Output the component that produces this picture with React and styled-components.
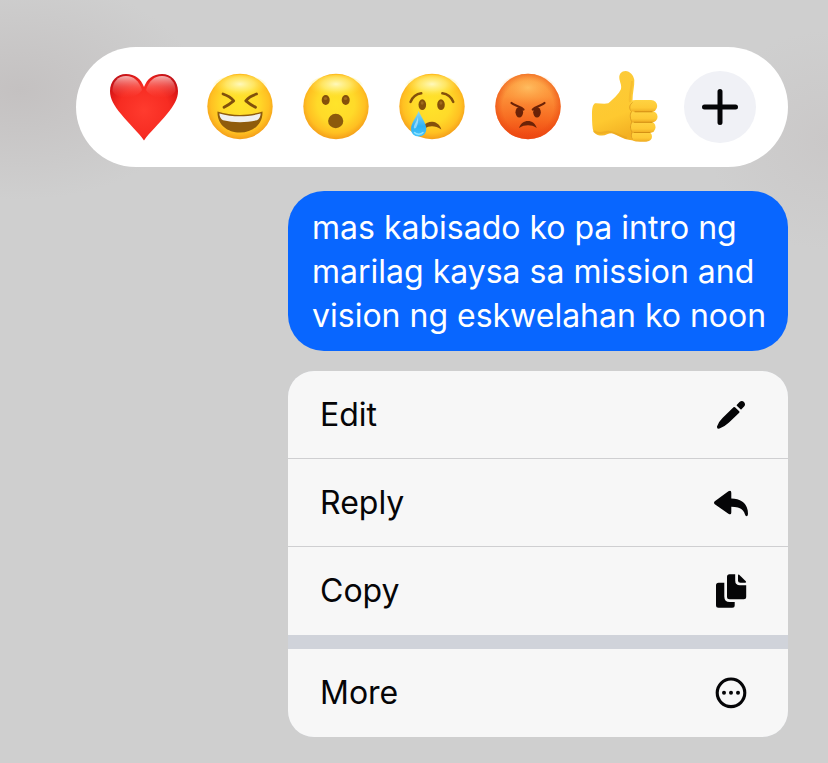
import styled, { createGlobalStyle } from 'styled-components'

const HeartEmoji = () => (
    <svg viewBox="0 0 72 72" aria-hidden="true">
        <defs>
            <radialGradient id="heartFill" cx="0.5" cy="0.55" r="0.62">
                <stop offset="0" stopColor="#ff3b2e" />
                <stop offset="0.6" stopColor="#f72c22" />
                <stop offset="0.85" stopColor="#e01a18" />
                <stop offset="1" stopColor="#c51318" />
            </radialGradient>
            <linearGradient id="heartShine" x1="0" y1="0" x2="0" y2="1">
                <stop offset="0" stopColor="#ffd9d6" stopOpacity="0.8" />
                <stop offset="0.5" stopColor="#ff9a94" stopOpacity="0.35" />
                <stop offset="1" stopColor="#ff5a50" stopOpacity="0" />
            </linearGradient>
        </defs>
        <path
            d="M36 69.5C31 62 21 53 13 43C6 34.5 2 28 2 20C2 10 9 3 18 3C27 3 33 8 36 16C39 8 45 3 54 3C63 3 70 10 70 20C70 28 66 34.5 59 43C51 53 41 62 36 69.5Z"
            fill="url(#heartFill)"
        />
        <path d="M4.5 20C4.5 11 10 5 18 5C26 5 31 10 34 19C30 26 12 32 4.5 20Z" fill="url(#heartShine)" />
        <path d="M67.5 20C67.5 11 62 5 54 5C46 5 41 10 38 19C42 26 60 32 67.5 20Z" fill="url(#heartShine)" />
    </svg>
)

const YellowFace = ({ id, children }) => (
    <svg viewBox="0 0 72 72" aria-hidden="true">
        <defs>
            <radialGradient id={id} cx="0.5" cy="0.46" r="0.57">
                <stop offset="0" stopColor="#ffe42a" />
                <stop offset="0.5" stopColor="#ffda29" />
                <stop offset="0.78" stopColor="#ffc022" />
                <stop offset="1" stopColor="#f19418" />
            </radialGradient>
            <radialGradient id={id + 'Shine'} cx="0.5" cy="0.35" r="0.5">
                <stop offset="0" stopColor="#fffac4" stopOpacity="0.95" />
                <stop offset="0.5" stopColor="#fff283" stopOpacity="0.65" />
                <stop offset="1" stopColor="#ffe43a" stopOpacity="0" />
            </radialGradient>
        </defs>
        <circle cx="36" cy="35.5" r="32.7" fill={`url(#${id})`} />
        <ellipse cx="36" cy="17" rx="28" ry="13" fill={`url(#${id}Shine)`} />
        {children}
    </svg>
)

const LaughEmoji = () => (
    <YellowFace id="laughFill">
        <path d="M19 23C23.5 24.5 27.5 27 29.7 29.8C27 32 23.5 34.5 20 36.3" fill="none" stroke="#80500c" strokeWidth="2.8" strokeLinecap="round" strokeLinejoin="round" />
        <path d="M52.5 23C48 24.5 44 27 41.8 29.8C44.5 32 48 34.5 51.5 36.3" fill="none" stroke="#80500c" strokeWidth="2.8" strokeLinecap="round" strokeLinejoin="round" />
        <path d="M13.5 40.5C28 45 44 45 58.5 40.5C59 53 49 61.5 36 61.5C23 61.5 13 53 13.5 40.5Z" fill="#8f5c0c" />
        <path d="M15.3 42.5C29 46.3 43 46.3 56.7 42.5C56.3 46 55.2 48.3 53 49.2C42 51.8 30 51.8 19 49.2C16.8 48.3 15.7 46 15.3 42.5Z" fill="#f0f0ee" />
    </YellowFace>
)

const WowEmoji = () => (
    <YellowFace id="wowFill">
        <ellipse cx="25.7" cy="29" rx="4" ry="5" fill="#84500b" />
        <ellipse cx="45.7" cy="29" rx="4" ry="5" fill="#84500b" />
        <ellipse cx="25.5" cy="27.5" rx="1.7" ry="1.5" fill="#a06a1c" />
        <ellipse cx="45.5" cy="27.5" rx="1.7" ry="1.5" fill="#a06a1c" />
        <ellipse cx="35.7" cy="50" rx="7.6" ry="7.2" fill="#8c5a0c" />
    </YellowFace>
)

const CryEmoji = () => (
    <YellowFace id="cryFill">
        <defs>
            <linearGradient id="tearFill" x1="0" y1="0" x2="0" y2="1">
                <stop offset="0" stopColor="#8fd8f5" />
                <stop offset="0.6" stopColor="#2fb1f2" />
                <stop offset="1" stopColor="#45c4fb" />
            </linearGradient>
        </defs>
        <path d="M14.5 31C16.5 26 20 23 25.3 22.3" fill="none" stroke="#84500b" strokeWidth="2.4" strokeLinecap="round" />
        <path d="M57.3 31C55.3 26 51.5 23 46.3 22.3" fill="none" stroke="#84500b" strokeWidth="2.4" strokeLinecap="round" />
        <ellipse cx="26.3" cy="33.7" rx="3.8" ry="5.4" fill="#84500b" />
        <ellipse cx="45" cy="33.7" rx="3.8" ry="5.4" fill="#84500b" />
        <ellipse cx="26.2" cy="32" rx="1.5" ry="1.7" fill="#a06a1c" />
        <ellipse cx="44.9" cy="32" rx="1.5" ry="1.7" fill="#a06a1c" />
        <path d="M28 54.5C30 51.5 33 50.5 36.5 50.7C41 51.2 44.5 54.5 45.3 58.5C42 56 39 55.3 36 55.3C33 55.3 31 56 29 57.5Z" fill="#84500b" />
        <path d="M22.7 40C25 46 30.3 52 30.3 58C30.3 62.5 27 65.5 22.7 65.5C18.3 65.5 15 62.5 15 58C15 52 20.5 46 22.7 40Z" fill="url(#tearFill)" />
        <path d="M22 46C22.5 50 22 53 20 57C18 58 17.5 57 18 55C19 52 21 50 22 46Z" fill="#ffffff" opacity="0.45" />
        <path d="M18.5 61.5C20.5 63.8 25 63.8 27 61.5" fill="none" stroke="#8fe4ff" strokeWidth="1.5" strokeLinecap="round" />
    </YellowFace>
)

const AngryEmoji = () => (
    <svg viewBox="0 0 72 72" aria-hidden="true">
        <defs>
            <linearGradient id="angryFill" x1="0" y1="0" x2="0" y2="1">
                <stop offset="0" stopColor="#fb9a3a" />
                <stop offset="0.35" stopColor="#fc9038" />
                <stop offset="0.7" stopColor="#f76a20" />
                <stop offset="1" stopColor="#ee4310" />
            </linearGradient>
            <radialGradient id="angryRim" cx="0.5" cy="0.5" r="0.5">
                <stop offset="0.78" stopColor="#ea4a12" stopOpacity="0" />
                <stop offset="1" stopColor="#ea4a12" stopOpacity="0.6" />
            </radialGradient>
            <radialGradient id="angryShine" cx="0.5" cy="0.4" r="0.5">
                <stop offset="0" stopColor="#ffc164" stopOpacity="0.9" />
                <stop offset="1" stopColor="#ffa848" stopOpacity="0" />
            </radialGradient>
        </defs>
        <circle cx="36" cy="35.5" r="32.7" fill="url(#angryFill)" />
        <circle cx="36" cy="35.5" r="32.7" fill="url(#angryRim)" />
        <ellipse cx="36" cy="20" rx="29" ry="17" fill="url(#angryShine)" />
        <ellipse cx="27.3" cy="41.3" rx="3.8" ry="5.3" fill="#6b2207" />
        <ellipse cx="45" cy="41.3" rx="3.8" ry="5.3" fill="#6b2207" />
        <path d="M19.5 32C22 34.5 27 34.5 31.5 38.5" fill="none" stroke="#6b2207" strokeWidth="2.2" strokeLinecap="round" />
        <path d="M52.5 32C50 34.5 45 34.5 40.8 38.5" fill="none" stroke="#6b2207" strokeWidth="2.2" strokeLinecap="round" />
        <path d="M27 57C28.5 52.5 32 50 36 50C40 50 43.3 52.5 44.8 57C42 55 39 54.3 36 54.3C33 54.3 30 55 27 57Z" fill="#6b2207" />
    </svg>
)

const ThumbEmoji = () => (
    <svg viewBox="0 0 72 72" aria-hidden="true">
        <defs>
            <linearGradient id="thumbFill" x1="0" y1="0" x2="0.3" y2="1">
                <stop offset="0" stopColor="#fccb3a" />
                <stop offset="0.7" stopColor="#fec930" />
                <stop offset="1" stopColor="#f3b123" />
            </linearGradient>
            <linearGradient id="fingerFill" x1="0" y1="0" x2="0" y2="1">
                <stop offset="0" stopColor="#ffd342" />
                <stop offset="0.65" stopColor="#fec935" />
                <stop offset="1" stopColor="#efab22" />
            </linearGradient>
        </defs>
        <path
            d="M37.5 0C33.5 0 31 3 31.3 7C31.6 11 34 14 33 18C31 23 25 28 20.3 32.3C16 33.5 11 32 7 32.3C4.5 34 4 38 4 44C4 51 4.3 57 5.5 61C8 64 11 64.5 14 64.5C18 64.5 21 62 24 62.3C30 64 35 68.5 42 69C48 70 54 71 59 70.3L60 30L44.5 29.5C44.5 22 46.6 15 46.3 9C45.5 4 42 0.3 37.5 0Z"
            fill="url(#thumbFill)"
        />
        <path d="M6 60C9 63 14 62 18 61C25 59 29 65 39 67" fill="none" stroke="#e09b1d" strokeWidth="2" opacity="0.4" />
        <path d="M44 10C43.5 18 41 25 42 31" fill="none" stroke="#eead27" strokeWidth="2" opacity="0.4" />
        <rect x="43" y="60.5" width="21" height="10" rx="5" fill="url(#fingerFill)" />
        <rect x="42" y="50.5" width="25.5" height="11.3" rx="5.5" fill="url(#fingerFill)" />
        <rect x="41.5" y="40" width="28" height="11.5" rx="5.6" fill="url(#fingerFill)" />
        <rect x="41.5" y="29" width="27.7" height="12" rx="6" fill="url(#fingerFill)" />
        <path d="M47 40.8H64M46 51.3H64M46 61.5H62" stroke="#d08c12" strokeWidth="0.9" strokeLinecap="round" />
        <path d="M44.5 31.5C41 34 41 38 43.5 40.5C41.5 44 42 48 44 51C42 54 42 58 44 61C43 64 43 66 44.5 68.5" fill="none" stroke="#dc9a1e" strokeWidth="0.9" />
    </svg>
)

const EditIcon = () => (
    <svg viewBox="0 0 36 36" aria-hidden="true">
        <path d="M21.5 10.3Q22.3 9.6 23 10.3L27.2 14.3Q27.9 15 27.2 15.8L17 25.5Q13 29.3 7.5 31.6Q4.6 32.3 5 29.5Q6.8 24.5 10.5 21Z" />
        <path d="M24.8 8.7Q24.4 8.2 24.9 7.7L27.5 5Q29.8 3 32 4.9Q34 7.2 32.1 9.5L29.5 12.2Q29 12.6 28.5 12.2Z" />
    </svg>
)

const ReplyIcon = () => (
    <svg viewBox="0 0 36 36" aria-hidden="true">
        <path d="M2.8 16.3L16.4 6.3Q19.3 4.8 19.3 7.8V13.5C29.5 13.5 36 19 36 29Q35.8 31.3 34.5 31.3Q33.5 31.3 33 29.5C31.5 24 27 21.8 19.3 21.8V27.4Q19.3 30.3 16.4 28.8L2.8 19.2Q1.2 17.7 2.8 16.3Z" />
    </svg>
)

const CopyIcon = () => (
    <svg viewBox="0 0 36 36" aria-hidden="true">
        <path d="M6.5 9.7H12.3V23.5Q12.3 29 17.8 29H22.7V32.2Q22.7 34.7 20.2 34.7H6.5Q4 34.7 4 32.2V12.2Q4 9.7 6.5 9.7Z" />
        <path d="M17.5 1.3H23.2V7.5Q23.2 12.3 28 12.3H34.2V23.8Q34.2 26.3 31.7 26.3H17.5Q15 26.3 15 23.8V3.8Q15 1.3 17.5 1.3Z" />
        <path d="M26 2.3Q26 1 27.2 1.7L33.8 8.3Q34.7 9.7 33.3 9.7H28.5Q26 9.7 26 7.2Z" />
    </svg>
)

const MoreIcon = () => (
    <svg viewBox="0 0 36 36" aria-hidden="true">
        <circle cx="19" cy="17.8" r="13.8" fill="none" stroke="currentColor" strokeWidth="3.1" />
        <circle cx="12" cy="17.8" r="2" />
        <circle cx="19" cy="17.8" r="2" />
        <circle cx="26" cy="17.8" r="2" />
    </svg>
)

const reactions = [
    { label: 'Love', Icon: HeartEmoji },
    { label: 'Haha', Icon: LaughEmoji },
    { label: 'Wow', Icon: WowEmoji },
    { label: 'Sad', Icon: CryEmoji },
    { label: 'Angry', Icon: AngryEmoji },
    { label: 'Like', Icon: ThumbEmoji },
]

const actions = [
    { label: 'Edit', Icon: EditIcon },
    { label: 'Reply', Icon: ReplyIcon },
    { label: 'Copy', Icon: CopyIcon },
]

const App = () => {
    return (
        <>
            <GlobalStyle />
            <Overlay>
                <ReactionBar>
                    {reactions.map(({ label, Icon }) => (
                        <Reaction key={label} type="button" aria-label={label}>
                            <Icon />
                        </Reaction>
                    ))}
                    <AddReaction type="button" aria-label="More reactions">
                        <svg viewBox="0 0 72 72" aria-hidden="true">
                            <path d="M36 20.5V51.5M20.5 36H51.5" stroke="#050507" strokeWidth="5" strokeLinecap="round" />
                        </svg>
                    </AddReaction>
                </ReactionBar>
                <Bubble>mas kabisado ko pa intro ng marilag kaysa sa mission and vision ng eskwelahan ko noon</Bubble>
                <Menu>
                    <Group>
                        {actions.map(({ label, Icon }) => (
                            <Action key={label} type="button">
                                {label}
                                <Icon />
                            </Action>
                        ))}
                    </Group>
                    <Group>
                        <Action type="button">
                            More
                            <MoreIcon />
                        </Action>
                    </Group>
                </Menu>
            </Overlay>
        </>
    )
}

const GlobalStyle = createGlobalStyle`
  * {
    box-sizing: border-box;
  }

  body {
    margin: 0;
    font-family: Inter, "Liberation Sans", sans-serif;
    background: #cfcfcf;
  }
`

const Overlay = styled.main`
  min-height: 100vh;
  display: flex;
  flex-direction: column;
  align-items: flex-end;
  padding: 47px 40px 26px;
  background:
    radial-gradient(ellipse 180px 110px at 20px 90px, #c4c1c1, transparent),
    radial-gradient(ellipse 120px 110px at 100% 140px, #cac8c8, transparent),
    #cfcfcf;
`

const ReactionBar = styled.div`
  display: flex;
  gap: 24px;
  padding: 24px 32px;
  margin-bottom: 24px;
  border-radius: 60px;
  background: #ffffff;
`

const Reaction = styled.button`
  width: 72px;
  height: 72px;
  padding: 0;
  border: none;
  border-radius: 50%;
  background: transparent;
  cursor: pointer;

  svg {
    display: block;
    width: 100%;
    height: 100%;
    overflow: visible;
  }
`

const AddReaction = styled(Reaction)`
  background: #f0f1f6;
`

const Bubble = styled.p`
  width: 100%;
  max-width: 500px;
  margin: 0 0 20px;
  padding: 15px 16px 13px 24px;
  border-radius: 36px;
  background: #0866ff;
  color: #ffffff;
  font-size: 32px;
  line-height: 44px;
`

const Menu = styled.div`
  width: 100%;
  max-width: 500px;
  display: flex;
  flex-direction: column;
  gap: 14px;
  border-radius: 26px;
  overflow: hidden;
  background: #d0d3da;
`

const Group = styled.div`
  display: flex;
  flex-direction: column;
  background: #f7f7f7;
`

const Action = styled.button`
  height: 88px;
  display: flex;
  align-items: center;
  justify-content: space-between;
  padding: 0 40px 0 32px;
  border: none;
  border-bottom: 1px solid #cfcfd1;
  background: transparent;
  color: #050507;
  font-family: inherit;
  font-size: 32px;
  line-height: 44px;
  cursor: pointer;

  &:last-child {
    border-bottom: none;
  }

  svg {
    width: 36px;
    height: 36px;
    fill: currentColor;
  }
`

export default App
